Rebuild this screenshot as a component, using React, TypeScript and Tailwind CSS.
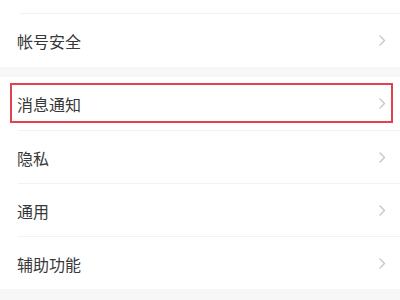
const groups = [["帐号安全"], ["消息通知", "隐私", "通用", "辅助功能"]];

function Chevron() {
  return (
    <svg width="7" height="11" viewBox="0 0 7 11" fill="none">
      <polyline points="1,1 5.5,5.5 1,10" stroke="#c6c6c6" strokeWidth="1.4" strokeLinecap="round" strokeLinejoin="round" />
    </svg>
  );
}

function Row({ title, highlight, first }: { title: string; highlight?: boolean; first?: boolean }) {
  return (
    <div className="relative h-[53px] bg-white">
      {!first && <div className="ml-[18px] border-t border-[#f2f2f2]" />}
      <div className="flex h-full items-center justify-between pl-[17px] pr-[14px]">
        <span className="text-[16px] text-[#383838]">{title}</span>
        <Chevron />
      </div>
      {highlight && (
        <div className="absolute left-[10px] right-[7px] top-[6px] bottom-[7px] border-[2.5px] border-[#e0434f]" />
      )}
    </div>
  );
}

export default function App() {
  return (
    <div
      className="flex h-[300px] w-[400px] flex-col overflow-hidden bg-[#f7f7f7]"
      style={{ fontFamily: '"Noto Sans CJK SC", "Noto Sans", sans-serif' }}
    >
      <div className="h-[14px] bg-white">
        <div className="ml-[20px] mt-[13px] border-t border-[#f2f2f2]" />
      </div>
      <Row title={groups[0][0]} first />
      <div className="h-[10px] shrink-0" />
      {groups[1].map((t, i) => (
        <Row key={t} title={t} first={i === 0} highlight={i === 0} />
      ))}
    </div>
  );
}
